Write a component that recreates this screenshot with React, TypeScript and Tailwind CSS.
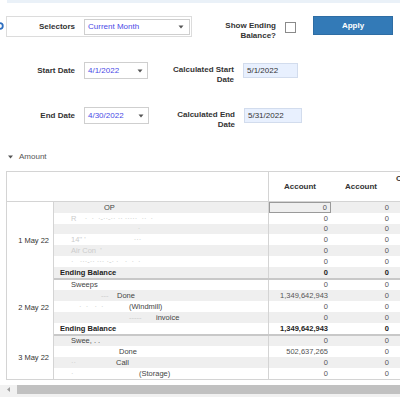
const font = { fontFamily: '"Liberation Sans", Arial, sans-serif' };

type Row = { label: string; pad: number; faint?: string; faintPad?: number; a1: string; bold?: boolean };

const groups: { date: string; rows: Row[]; sep: boolean }[] = [
  {
    date: "1 May 22",
    sep: true,
    rows: [
      { label: "OP", pad: 50, a1: "0" },
      { label: "", pad: 17, faint: "R    ·  ·  ·-··-·· ·· ·····  ··  ·", faintPad: 17, a1: "0" },
      { label: "", pad: 17, faint: "                                ·", faintPad: 17, a1: "0" },
      { label: "", pad: 17, faint: "14'' '                       ···", faintPad: 17, a1: "0" },
      { label: "", pad: 17, faint: "Air Con  '", faintPad: 17, a1: "0" },
      { label: "", pad: 17, faint: "·   ···-·· ··· ·-· ·   ·  ·  ·", faintPad: 17, a1: "0" },
      { label: "Ending Balance", pad: 6, a1: "0", bold: true },
    ],
  },
  {
    date: "2 May 22",
    sep: true,
    rows: [
      { label: "Sweeps", pad: 17, a1: "0" },
      { label: "Done", pad: 63, faint: "---", faintPad: 47, a1: "1,349,642,943" },
      { label: "(Windmill)", pad: 75, faint: "·  ·   ·  ·", faintPad: 25, a1: "0" },
      { label: "invoice", pad: 102, faint: "-----", faintPad: 75, a1: "0" },
      { label: "Ending Balance", pad: 6, a1: "1,349,642,943", bold: true },
    ],
  },
  {
    date: "3 May 22",
    sep: false,
    rows: [
      { label: "Swee, . .", pad: 17, a1: "0" },
      { label: "Done", pad: 65, a1: "502,637,265" },
      { label: "Call", pad: 62, faint: "··", faintPad: 17, a1: "0" },
      { label: "(Storage)", pad: 85, faint: "·", faintPad: 17, a1: "0" },
    ],
  },
];

function Caret() {
  return (
    <svg width="6" height="4" viewBox="0 0 6 4" className="shrink-0">
      <path d="M0.5 0.5 L5.5 0.5 L3 3.5 Z" fill="#555" />
    </svg>
  );
}

export default function App() {
  let idx = 0;
  return (
    <div className="relative w-[400px] h-[397px] overflow-hidden bg-white text-[#333]" style={font}>
      <div className="ml-[7px] h-[3px] bg-[#eaf1f8]" />

      {/* cut off icon at the left edge */}
      <svg className="absolute left-[-4px] top-[22px]" width="8" height="8" viewBox="0 0 8 8">
        <circle cx="4" cy="4" r="2.8" fill="none" stroke="#2f6fc0" strokeWidth="1.8" />
      </svg>

      {/* row 1 */}
      <div className="mt-[13px] flex items-start h-[21px]">
        <div className="ml-[6px] w-[186px] h-[21px] border border-[#dcdcdc] flex items-center">
          <div className="w-[68px] text-right text-[8px] font-bold text-[#333]">Selectors</div>
          <div className="ml-[9px] w-[106px] h-[16px] border border-[#cfcfcf] flex items-center pl-[3px] pr-[5px]">
            <span className="flex-1 text-[8px] text-[#4a4ae6]">Current Month</span>
            <Caret />
          </div>
        </div>
        <div className="w-[84px] mt-[5px] text-right text-[8px] font-bold leading-[10px]">
          Show Ending
          <br />
          Balance?
        </div>
        <div className="ml-[9px] mt-[6px] w-[11px] h-[11px] border border-[#8a8a8a] bg-white" />
        <button className="ml-[17px] w-[80px] h-[19px] bg-[#337ab7] border border-[#2e6da4] text-white text-[8px] font-bold">
          Apply
        </button>
      </div>

      {/* row 2 */}
      <div className="mt-[25px] flex items-start h-[23px]">
        <div className="w-[75px] h-[17px] flex items-center justify-end text-[8px] font-bold">Start Date</div>
        <div className="ml-[9px] w-[64px] h-[17px] border border-[#cfcfcf] flex items-center pl-[3px] pr-[4px]">
          <span className="flex-1 text-[8px] text-[#4a4ae6]">4/1/2022</span>
          <Caret />
        </div>
        <div className="w-[86px] mt-[3px] text-right text-[8px] font-bold leading-[10px]">
          Calculated Start
          <br />
          Date
        </div>
        <div className="ml-[9px] mt-[1px] w-[55px] h-[15px] bg-[#e8f0fe] border border-[#d2dced] flex items-center pl-[3px] text-[8px] text-[#333]">
          5/1/2022
        </div>
      </div>

      {/* row 3 */}
      <div className="mt-[22px] flex items-start h-[23px]">
        <div className="w-[75px] h-[17px] flex items-center justify-end text-[8px] font-bold">End Date</div>
        <div className="ml-[9px] w-[65px] h-[17px] border border-[#cfcfcf] flex items-center pl-[3px] pr-[4px]">
          <span className="flex-1 text-[8px] text-[#4a4ae6]">4/30/2022</span>
          <Caret />
        </div>
        <div className="w-[86px] mt-[3px] text-right text-[8px] font-bold leading-[10px]">
          Calculated End
          <br />
          Date
        </div>
        <div className="ml-[9px] mt-[1px] w-[58px] h-[15px] bg-[#e8f0fe] border border-[#d2dced] flex items-center pl-[3px] text-[8px] text-[#333]">
          5/31/2022
        </div>
      </div>

      {/* amount */}
      <div className="mt-[22px] h-[10px] flex items-center pl-[8px] gap-[6px]">
        <svg width="5" height="4" viewBox="0 0 5 4">
          <path d="M0 0.5 L5 0.5 L2.5 3.5 Z" fill="#555" />
        </svg>
        <span className="text-[8px] text-[#555]">Amount</span>
      </div>

      {/* table */}
      <div className="mt-[9px] ml-[6px] w-[394px] overflow-hidden border-t border-l border-b border-[#d4d4d4]">
        <div className="w-[430px] text-[7.5px]">
          <div className="flex h-[30px] border-b border-[#d4d4d4]">
            <div className="w-[262px] border-r border-[#d4d4d4]" />
            <div className="w-[62px] flex items-center justify-center font-bold text-[8px]">Account</div>
            <div className="w-[60px] flex items-center justify-center font-bold text-[8px]">Account</div>
            <div className="w-[30px] pl-[5px] pt-[1px] font-bold text-[8px]">C</div>
          </div>

          {groups.map((g) => (
            <div key={g.date} className="flex">
              <div className="w-[47px] border-r border-[#d4d4d4] flex items-center justify-end pr-[4px] text-[#333]">
                {g.date}
              </div>
              <div className="flex flex-col">
                {g.rows.map((r) => {
                  const i = idx++;
                  const first = i === 0;
                  return (
                    <div
                      key={i}
                      className={`flex h-[10.8px] items-center ${i % 2 === 0 ? "bg-[#efefef]" : "bg-white"} ${r.bold ? "font-bold text-[#222]" : "text-[#444]"}`}
                    >
                      <div className="relative w-[215px] h-full border-r border-[#d4d4d4] flex items-center whitespace-pre">
                        {r.faint && (
                          <span className="absolute text-[#cccccc]" style={{ left: r.faintPad }}>
                            {r.faint}
                          </span>
                        )}
                        <span style={{ paddingLeft: r.pad }}>{r.label}</span>
                      </div>
                      <div
                        className={`w-[62px] h-full flex items-center justify-end pr-[3px] ${first ? "border border-[#9a9a9a]" : ""} ${r.bold ? "" : "text-[#555]"}`}
                      >
                        {r.a1}
                      </div>
                      <div className={`w-[60px] h-full flex items-center justify-end pr-[2px] ${r.bold ? "" : "text-[#555]"}`}>0</div>
                      <div className="w-[30px] h-full" />
                    </div>
                  );
                })}
                {g.sep && <div className="h-[2px] bg-[#c8c8c8]" />}
              </div>
            </div>
          ))}
        </div>
      </div>

      {/* scrollbar */}
      <div className="mt-[5px] flex h-[9px]">
        <div className="w-[17px] bg-[#f1f1f1] flex items-center justify-center">
          <svg width="3" height="5" viewBox="0 0 3 5">
            <path d="M3 0 L0 2.5 L3 5 Z" fill="#a0a0a0" />
          </svg>
        </div>
        <div className="flex-1 bg-[#c1c1c1]" />
      </div>
      <div className="h-[3px] bg-[#f1f1f1]" />
    </div>
  );
}
